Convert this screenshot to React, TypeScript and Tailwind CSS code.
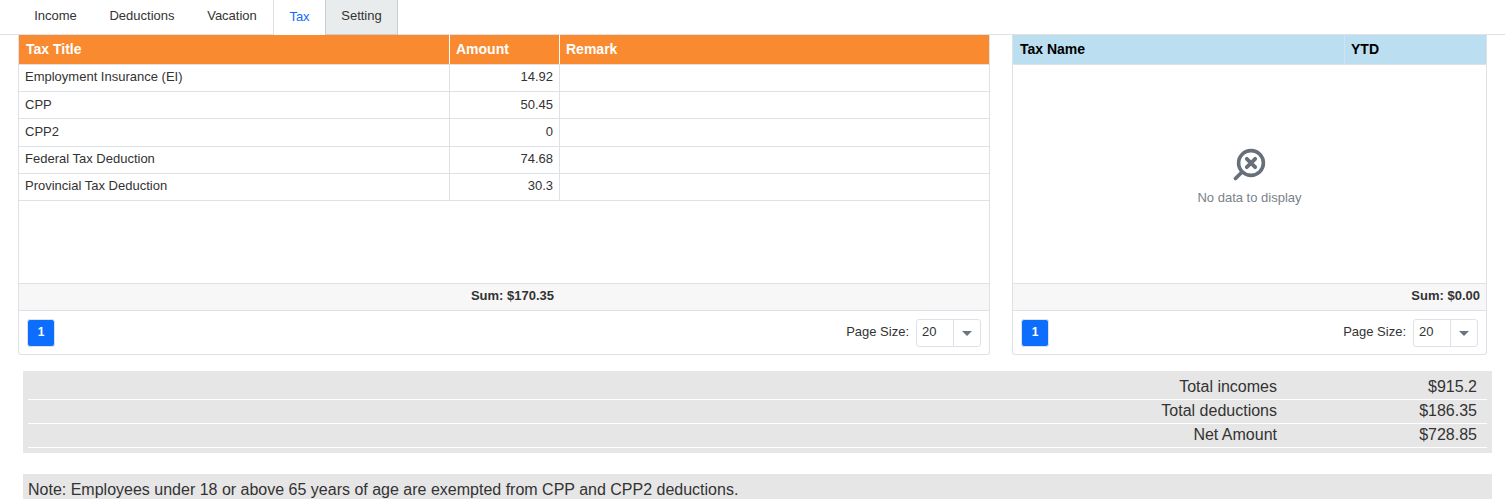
import React from 'react';

const rows = [
  { title: 'Employment Insurance (EI)', amount: '14.92' },
  { title: 'CPP', amount: '50.45' },
  { title: 'CPP2', amount: '0' },
  { title: 'Federal Tax Deduction', amount: '74.68' },
  { title: 'Provincial Tax Deduction', amount: '30.3' },
];

const totals = [
  { label: 'Total incomes', value: '$915.2' },
  { label: 'Total deductions', value: '$186.35' },
  { label: 'Net Amount', value: '$728.85' },
];

const Pager = () => (
  <div className="flex h-[43px] items-start justify-between pt-[8px] pl-[8px] pr-[8px]">
    <button className="h-[28px] w-[28px] rounded-[3px] border border-[#dde2ea] bg-[#0d6efd] pb-[3px] text-[12px] font-bold text-white">1</button>
    <div className="flex h-[28px] items-center">
      <span className="mr-[7px] pb-[2px] text-[13px] text-[#333]">Page Size:</span>
      <div className="flex h-[28px] w-[65px] items-stretch rounded-[3px] border border-[#dde2ea] bg-white">
        <span className="flex w-[36px] items-center pb-[3px] pl-[5px] text-[13px] text-[#333]">20</span>
        <span className="flex flex-1 items-center justify-center border-l border-[#dde2ea]">
          <span className="h-0 w-0 border-x-[5px] border-t-[5px] border-x-transparent border-t-[#6c757d]" />
        </span>
      </div>
    </div>
  </div>
);

const EmptyIcon = () => (
  <svg width="34" height="34" viewBox="0 0 34 34" fill="none" stroke="#67707a" className="-ml-[2px]">
    <circle cx="19" cy="15" r="12.4" strokeWidth="3.6" />
    <path d="M10 24 L3.5 30.5" strokeWidth="3.8" strokeLinecap="round" />
    <path d="M14.8 10.8 L23.2 19.2 M23.2 10.8 L14.8 19.2" strokeWidth="3.8" strokeLinecap="round" />
  </svg>
);

export default function App() {
  return (
    <div className="h-[499px] overflow-hidden bg-white font-['Liberation_Sans',Arial,sans-serif] text-[#333]">
      <div className="flex h-[35px] items-stretch border-b border-[#dee2e6] pl-[18px] text-[13px]">
        <div className="flex w-[75px] items-center justify-center pb-[2px]">Income</div>
        <div className="flex w-[98px] items-center justify-center pb-[2px]">Deductions</div>
        <div className="flex w-[82px] items-center justify-center pb-[2px]">Vacation</div>
        <div className="-mb-px flex w-[52px] items-center justify-center border-l border-[#dee2e6] bg-white pb-[2px] text-[#0d6efd]">Tax</div>
        <div className="-mb-px flex w-[73px] items-center justify-center border-x border-b border-[#c9cdd0] bg-[#e9ecec] pb-[2px]">Setting</div>
      </div>

      <div className="flex gap-[22px] pl-[18px] pr-[18px]">
        <div className="flex h-[320px] w-[972px] flex-col rounded-b-[3px] border-x border-b border-[#dee2e6]">
          <div className="flex h-[30px] border-b border-[#dee2e6] bg-[#f98a2f] text-[14px] font-bold text-white">
            <div className="flex w-[431px] items-center border-r border-white pl-[7px]">Tax Title</div>
            <div className="flex w-[110px] items-center border-r border-white pl-[6px]">Amount</div>
            <div className="flex flex-1 items-center pl-[6px]">Remark</div>
          </div>
          <div className="flex-1 text-[13px]">
            {rows.map((r) => (
              <div key={r.title} className="flex h-[27.2px] border-b border-[#dee2e6]">
                <div className="flex w-[431px] items-center border-r border-[#dee2e6] pb-[2px] pl-[6px]">{r.title}</div>
                <div className="flex w-[110px] items-center justify-end border-r border-[#dee2e6] pb-[2px] pr-[6px]">{r.amount}</div>
                <div className="flex-1" />
              </div>
            ))}
          </div>
          <div className="flex h-[28px] items-center border-y border-[#dee2e6] bg-[#f7f7f7] pb-[2px] text-[13px] font-bold">
            <div className="w-[535px] text-right">Sum: $170.35</div>
          </div>
          <Pager />
        </div>

        <div className="flex h-[320px] flex-1 flex-col rounded-b-[3px] border-x border-b border-[#dee2e6]">
          <div className="flex h-[30px] border-b border-[#dee2e6] bg-[#bbdef1] text-[14px] font-bold text-black">
            <div className="flex w-[332px] items-center border-r border-[#cfe4ef] pl-[7px]">Tax Name</div>
            <div className="flex flex-1 items-center pl-[6px]">YTD</div>
          </div>
          <div className="flex flex-1 flex-col items-center justify-start pt-[83px]">
            <EmptyIcon />
            <span className="mt-[6px] text-[13px] text-[#7b8189]">No data to display</span>
          </div>
          <div className="flex h-[28px] items-center justify-end border-y border-[#dee2e6] bg-[#f7f7f7] pb-[2px] pr-[6px] text-[13px] font-bold">Sum: $0.00</div>
          <Pager />
        </div>
      </div>

      <div className="mt-[16px] ml-[23px] mr-[13px] h-[82px] bg-[#e6e6e6] px-[5px] text-[16px] leading-[24px]">
        <div className="pt-[5px]">
          {totals.map((t) => (
            <div key={t.label} className="flex h-[24px] items-center justify-end border-b border-white pb-[1px] pr-[10px]">
              <span className="w-[250px] text-right">{t.label}</span>
              <span className="w-[200px] text-right">{t.value}</span>
            </div>
          ))}
        </div>
      </div>

      <div className="mt-[21px] ml-[23px] mr-[13px] h-[40px] bg-[#e6e6e6] pl-[5px] pt-[4px] text-[16px] leading-[24px]">
        Note: Employees under 18 or above 65 years of age are exempted from CPP and CPP2 deductions.
      </div>
    </div>
  );
}
